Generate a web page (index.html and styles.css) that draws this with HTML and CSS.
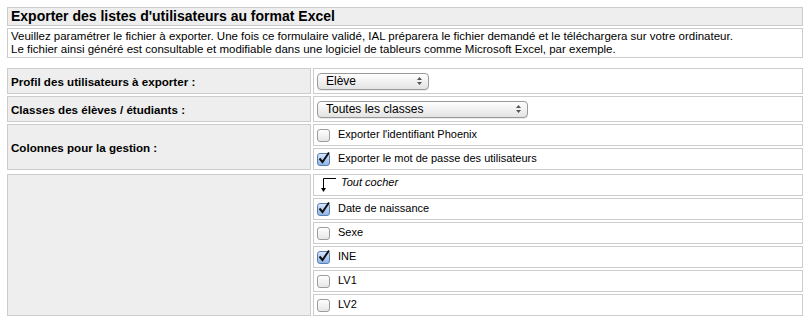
FILE: index.html
```html
<!DOCTYPE html>
<html>
<head>
  <meta charset="utf-8">
  <title>Exporter des listes d'utilisateurs</title>
  <link rel="stylesheet" href="styles.css">
</head>
<body>
<div class="title">Exporter des listes d'utilisateurs au format Excel</div>
<div class="intro">
  Veuillez paramétrer le fichier à exporter. Une fois ce formulaire validé, IAL préparera le fichier demandé et le téléchargera sur votre ordinateur.<br>
  Le fichier ainsi généré est consultable et modifiable dans une logiciel de tableurs comme Microsoft Excel, par exemple.
</div>

<table class="form first">
  <tr class="tall">
    <td class="label">Profil des utilisateurs à exporter :</td>
    <td class="field">
      <span class="popup small">Elève
        <svg class="arrows" width="5" height="8" viewBox="0 0 5 8"><path d="M0 3 L2.5 0 L5 3 Z M0 5 L2.5 8 L5 5 Z" fill="#555"/></svg>
      </span>
    </td>
  </tr>
  <tr class="tall">
    <td class="label">Classes des élèves / étudiants :</td>
    <td class="field">
      <span class="popup wide">Toutes les classes
        <svg class="arrows" width="5" height="8" viewBox="0 0 5 8"><path d="M0 3 L2.5 0 L5 3 Z M0 5 L2.5 8 L5 5 Z" fill="#555"/></svg>
      </span>
    </td>
  </tr>
  <tr>
    <td class="label" rowspan="2">Colonnes pour la gestion :</td>
    <td class="field"><span class="check"></span>Exporter l'identifiant Phoenix</td>
  </tr>
  <tr>
    <td class="field"><span class="check on"><svg width="14" height="14" viewBox="0 0 14 14"><path d="M2.5 7.5 L5.5 11 L12 1.5" fill="none" stroke="#111" stroke-width="2"/></svg></span>Exporter le mot de passe des utilisateurs</td>
  </tr>
</table>

<table class="form">
  <tr>
    <td class="label" rowspan="6"></td>
    <td class="field toggle">
      <svg class="bend" width="16" height="18" viewBox="0 0 16 18"><path d="M16 2.5 H3.5 V14" fill="none" stroke="#000" stroke-width="1"/><path d="M1 12 L3.5 16 L6 12 Z" fill="#000"/></svg>
      <em>Tout cocher</em>
    </td>
  </tr>
  <tr>
    <td class="field"><span class="check on"><svg width="14" height="14" viewBox="0 0 14 14"><path d="M2.5 7.5 L5.5 11 L12 1.5" fill="none" stroke="#111" stroke-width="2"/></svg></span>Date de naissance</td>
  </tr>
  <tr>
    <td class="field"><span class="check"></span>Sexe</td>
  </tr>
  <tr>
    <td class="field"><span class="check on"><svg width="14" height="14" viewBox="0 0 14 14"><path d="M2.5 7.5 L5.5 11 L12 1.5" fill="none" stroke="#111" stroke-width="2"/></svg></span>INE</td>
  </tr>
  <tr>
    <td class="field"><span class="check"></span>LV1</td>
  </tr>
  <tr>
    <td class="field"><span class="check"></span>LV2</td>
  </tr>
</table>
</body>
</html>
```
FILE: styles.css
```css
body {
  margin: 7px 8px 0 7px;
  font-family: Tahoma, "Liberation Sans", Arial, sans-serif;
  font-size: 11px;
  color: #000;
  background: #fff;
}

.title {
  height: 17px;
  line-height: 17px;
  padding: 0 3px;
  border: 1px solid #ccc;
  background-color: #eee;
  font-size: 14px;
  font-weight: bold;
}

.intro {
  margin-top: 2px;
  padding: 1px 3px;
  border: 1px solid #ccc;
  font-size: 11.5px;
  line-height: 13px;
}

.form {
  width: calc(100% + 4px);
  margin: 0 -2px;
  border-collapse: separate;
  border-spacing: 2px;
}

.form.first {
  margin-top: 8px;
}

.form td {
  border: 1px solid #ccc;
  padding: 0 3px;
  height: 20px;
}

.form tr.tall td {
  height: 24px;
}

.form td.label {
  width: 296px;
  background-color: #eee;
  font-size: 11.6px;
  font-weight: bold;
  padding-left: 3px;
}

.field {
  background-color: #fff;
}

.popup {
  display: inline-flex;
  align-items: center;
  justify-content: space-between;
  box-sizing: border-box;
  height: 17px;
  padding: 0 6px 0 8px;
  border: 1px solid #9a9a9a;
  border-radius: 4px;
  background: linear-gradient(#ffffff, #f1f1f1 50%, #e3e3e3);
  box-shadow: 0 1px 0 rgba(0, 0, 0, 0.08);
  font-size: 12px;
  vertical-align: middle;
}

.popup.small {
  width: 112px;
}

.popup.wide {
  width: 211px;
}

.check {
  display: inline-block;
  position: relative;
  box-sizing: border-box;
  width: 13px;
  height: 13px;
  margin-right: 8px;
  border: 1px solid #9c9c9c;
  border-radius: 3px;
  background: linear-gradient(#ffffff, #e6e6e6);
  vertical-align: middle;
}

.check.on {
  border-color: #5b7eb0;
  background: linear-gradient(#d7e6fb, #8fb5ea);
}

.check svg {
  position: absolute;
  left: -1px;
  top: -3px;
}

.form td.toggle {
  position: relative;
  vertical-align: top;
  padding-left: 27px;
}

.toggle .bend {
  position: absolute;
  left: 6px;
  top: 1px;
}

.toggle em {
  display: block;
  margin-top: 1px;
}
```
